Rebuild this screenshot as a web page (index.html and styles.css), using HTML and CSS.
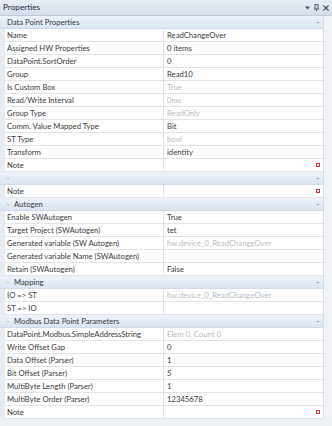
FILE: index.html
```html
<!DOCTYPE html>
<html>
<head>
<meta charset="utf-8">
<link rel="stylesheet" href="styles.css">
</head>
<body>
<div class="panel">
  <div class="titlebar">
    <span class="title">Properties</span>
    <span class="tools">
      <svg class="ic" width="5" height="4" viewBox="0 0 5 4"><path d="M0 0.5H5L2.5 3.5Z" fill="#4a5566"/></svg>
      <svg class="ic" width="5" height="7" viewBox="0 0 5 7"><path d="M1 0.5V5M4 0.5V5M1 0.5H4M0 5H5M2.5 5V7" stroke="#4a5566" stroke-width="1" fill="none"/></svg>
      <svg class="ic" width="6" height="6" viewBox="0 0 6 6"><path d="M0.5 0.5L5.5 5.5M5.5 0.5L0.5 5.5" stroke="#4a5566" stroke-width="1.2"/></svg>
    </span>
  </div>
  <div class="body">
    <div class="grid">
      <div class="cat"><span class="cname">Data Point Properties</span><span class="minus">-</span></div>
      <div class="row"><span class="k">Name</span><span class="v">ReadChangeOver</span></div>
      <div class="row"><span class="k">Assigned HW Properties</span><span class="v">0 items</span></div>
      <div class="row"><span class="k">DataPoint.SortOrder</span><span class="v">0</span></div>
      <div class="row"><span class="k">Group</span><span class="v">Read10</span></div>
      <div class="row"><span class="k">Is Custom Box</span><span class="v dim">True</span></div>
      <div class="row"><span class="k">Read/Write Interval</span><span class="v dim">0ms</span></div>
      <div class="row"><span class="k">Group Type</span><span class="v dim">ReadOnly</span></div>
      <div class="row"><span class="k">Comm. Value Mapped Type</span><span class="v">Bit</span></div>
      <div class="row"><span class="k">ST Type</span><span class="v dim">bool</span></div>
      <div class="row"><span class="k">Transform</span><span class="v">identity</span></div>
      <div class="row"><span class="k">Note</span><span class="v"><svg class="note" width="4" height="4" viewBox="0 0 4 4"><rect x="0.5" y="0.5" width="3" height="3" fill="#fff" stroke="#e0303a"/></svg></span></div>
      <div class="cat"><span class="dot">·</span><span class="cname"></span><span class="minus">-</span></div>
      <div class="row"><span class="k">Note</span><span class="v"><svg class="note" width="4" height="4" viewBox="0 0 4 4"><rect x="0.5" y="0.5" width="3" height="3" fill="#fff" stroke="#e0303a"/></svg></span></div>
      <div class="cat"><span class="dot">·</span><span class="cname">Autogen</span><span class="minus">-</span></div>
      <div class="row"><span class="k">Enable SWAutogen</span><span class="v">True</span></div>
      <div class="row"><span class="k">Target Project (SWAutogen)</span><span class="v">tet</span></div>
      <div class="row"><span class="k">Generated variable (SW Autogen)</span><span class="v dim">hw.device_0_ReadChangeOver</span></div>
      <div class="row"><span class="k">Generated variable Name (SWAutogen)</span><span class="v"></span></div>
      <div class="row"><span class="k">Retain (SWAutogen)</span><span class="v">False</span></div>
      <div class="cat"><span class="dot">·</span><span class="cname">Mapping</span><span class="minus">-</span></div>
      <div class="row"><span class="k">IO =&gt; ST</span><span class="v dim">hw.device_0_ReadChangeOver</span></div>
      <div class="row"><span class="k">ST =&gt; IO</span><span class="v"></span></div>
      <div class="cat"><span class="dot">·</span><span class="cname">Modbus Data Point Parameters</span><span class="minus">-</span></div>
      <div class="row"><span class="k">DataPoint.Modbus.SimpleAddressString</span><span class="v dim">Elem 0, Count 0</span></div>
      <div class="row"><span class="k">Write Offset Gap</span><span class="v">0</span></div>
      <div class="row"><span class="k">Data Offset (Parser)</span><span class="v">1</span></div>
      <div class="row"><span class="k">Bit Offset (Parser)</span><span class="v">5</span></div>
      <div class="row"><span class="k">MultiByte Length (Parser)</span><span class="v">1</span></div>
      <div class="row"><span class="k">MultiByte Order (Parser)</span><span class="v">12345678</span></div>
      <div class="row"><span class="k">Note</span><span class="v"><svg class="note" width="4" height="4" viewBox="0 0 4 4"><rect x="0.5" y="0.5" width="3" height="3" fill="#fff" stroke="#e0303a"/></svg></span></div>
    </div>
    <div class="scroll"></div>
  </div>
</div>
</body>
</html>
```
FILE: styles.css
```css
html, body {
  margin: 0;
  padding: 0;
  background: #eef1f5;
}
.panel {
  width: 332px;
  height: 426px;
  display: flex;
  flex-direction: column;
  font-family: Lato, "Open Sans", sans-serif;
  font-size: 7.7px;
  color: #3a3a3a;
  background: #eef1f5;
  overflow: hidden;
}
.titlebar {
  height: 15px;
  display: flex;
  align-items: center;
  justify-content: space-between;
  padding: 0 3px 0 3px;
  background: linear-gradient(#e9eef5, #d5dde9);
  border-bottom: 1px solid #c2ccd9;
  color: #1f2a38;
  font-size: 8.2px;
}
.title {
  line-height: 15px;
}
.tools {
  display: flex;
  align-items: center;
  gap: 4px;
}
.ic {
  display: block;
}
.body {
  display: flex;
  height: 403px;
}
.grid {
  width: 318px;
  background: #e6ecf4;
  padding-left: 5px;
  border-right: 1px solid #d6dde7;
}
.row {
  display: grid;
  grid-template-columns: 159px 159px;
  height: 13px;
  box-sizing: border-box;
  border-bottom: 1px solid #e2e4e8;
  background: #ffffff;
}
.k {
  padding-left: 2px;
  line-height: 12px;
  white-space: nowrap;
  overflow: hidden;
  border-right: 1px solid #e2e4e8;
}
.v {
  padding-left: 3px;
  line-height: 12px;
  white-space: nowrap;
  overflow: hidden;
  display: flex;
  align-items: center;
}
.dim {
  color: #b9bcc2;
}
.note {
  display: block;
  margin-left: auto;
  margin-right: 3px;
}
.cat {
  display: flex;
  align-items: center;
  height: 13px;
  box-sizing: border-box;
  margin-left: -5px;
  padding-left: 7px;
  padding-right: 4px;
  background: linear-gradient(#eef3fa, #dbe5f2);
  border-bottom: 1px solid #d0dbea;
  color: #3a3a3a;
  line-height: 12px;
}
.dot {
  width: 7px;
  color: #888;
}
.cname {
  flex: 1;
}
.minus {
  color: #555;
}
.scroll {
  flex: 1;
  background: #f0f2f5;
}
```
